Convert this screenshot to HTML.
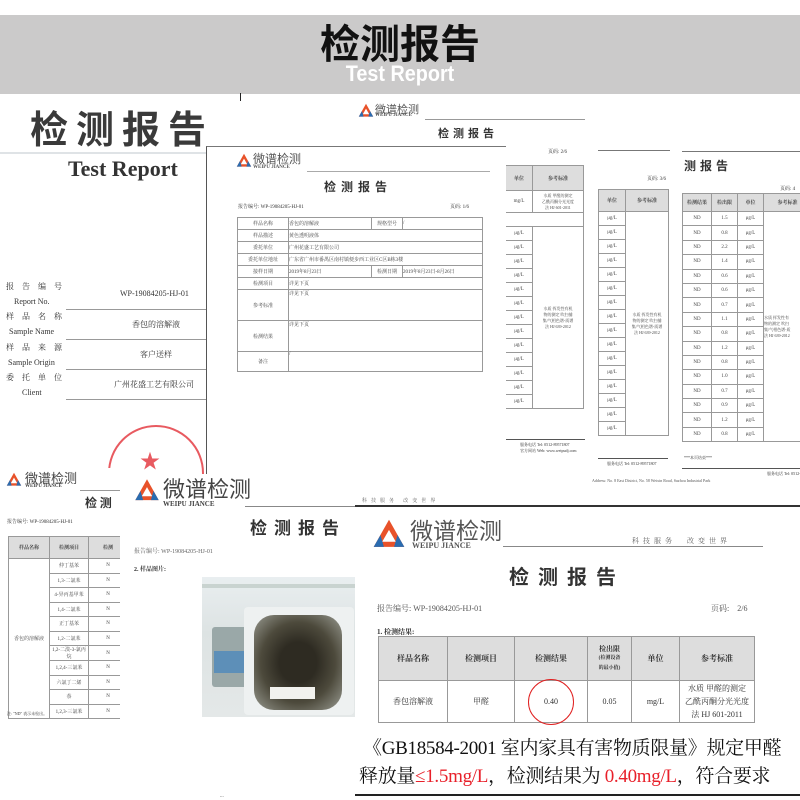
<!DOCTYPE html>
<html><head><meta charset="utf-8">
<style>
*{margin:0;padding:0;box-sizing:border-box}
body{width:800px;height:800px;overflow:hidden;background:#fff;position:relative;font-family:"Liberation Sans","Noto Sans CJK SC",sans-serif;color:#333}
.a{position:absolute}
.doc{position:absolute;background:#fff}
.t{position:absolute;white-space:nowrap;font-family:"Liberation Serif","Noto Serif CJK SC",serif}
.tb{position:absolute;border-collapse:collapse;font-family:"Liberation Serif","Noto Serif CJK SC",serif;color:#444}
.tb td{border:1px solid #999;text-align:center;font-size:5px;padding:0}
.tb tr.h td{background:#ddd;font-weight:bold}
.logo{position:absolute}
.red{color:#e8202a}
</style></head><body>

<div class="a" style="left:0;top:15px;width:800px;height:79px;background:#cbcaca"></div>
<div class="a" style="left:0;top:17px;width:800px;text-align:center;font-size:40px;font-weight:bold;color:#111;font-family:'Noto Sans CJK SC',sans-serif;line-height:48px">检测报告</div>
<div class="a" style="left:0;top:62px;width:800px;text-align:center;font-size:22px;font-weight:bold;color:#fff;line-height:24px;transform:scaleX(0.9)">Test Report</div>
<div class="a" style="left:240px;top:93px;width:1px;height:8px;background:#222"></div>

<div class="doc" style="left:0;top:95px;width:206px;height:380px">
  <div class="t" style="left:30px;top:4px;font-size:38px;font-weight:bold;color:#3a3a3a;letter-spacing:8px;font-family:'Noto Sans CJK SC',sans-serif">检测报告</div>
  <div class="a" style="left:0;top:57px;width:206px;height:2px;background:#dfe3e6"></div>
  <div class="t" style="left:68px;top:61px;font-size:22px;font-weight:bold;color:#333">Test Report</div>
  <div class="t" style="left:6px;top:186px;font-size:8px;letter-spacing:8px">报告编号</div>
  <div class="t" style="left:14px;top:202px;font-size:8px">Report No.</div>
  <div class="t" style="left:6px;top:216px;font-size:8px;letter-spacing:8px">样品名称</div>
  <div class="t" style="left:9px;top:232px;font-size:8px">Sample Name</div>
  <div class="t" style="left:6px;top:247px;font-size:8px;letter-spacing:8px">样品来源</div>
  <div class="t" style="left:8px;top:263px;font-size:8px">Sample Origin</div>
  <div class="t" style="left:6px;top:277px;font-size:8px;letter-spacing:8px">委托单位</div>
  <div class="t" style="left:22px;top:293px;font-size:8px">Client</div>
  <div class="t" style="left:120px;top:194px;font-size:8px">WP-19084205-HJ-01</div>
  <div class="t" style="left:132px;top:224px;font-size:8px">香包的溶解液</div>
  <div class="t" style="left:140px;top:254px;font-size:8px">客户送样</div>
  <div class="t" style="left:114px;top:284px;font-size:8px">广州花盛工艺有限公司</div>
  <div class="a" style="left:66px;top:214px;width:140px;height:1px;background:#999"></div>
  <div class="a" style="left:66px;top:244px;width:140px;height:1px;background:#999"></div>
  <div class="a" style="left:66px;top:274px;width:140px;height:1px;background:#999"></div>
  <div class="a" style="left:66px;top:304px;width:140px;height:1px;background:#999"></div>
  <div class="a" style="left:108px;top:330px;width:96px;height:96px;border:2px solid #e85a60;border-radius:50%"></div>
  <div class="a" style="left:140px;top:350px;font-size:20px;color:#e85a60">★</div>
</div>

<div class="doc" style="left:355px;top:95px;width:240px;height:375px">
  <svg class="logo" style="left:3px;top:8px" width="16" height="16" viewBox="0 0 20 20"><path d="M10 1 L19 17 L1 17Z" fill="#e8522a"/><path d="M10 7 L14 14 L6 14Z" fill="#fff"/><path d="M1 17 L5 10 L7 17Z M19 17 L15 10 L13 17Z" fill="#2a6cb0"/></svg>
  <div class="t" style="left:20px;top:6px;font-size:11px;color:#555;font-family:'Noto Sans CJK SC',sans-serif">微谱检测</div>
  <div class="t" style="left:20px;top:18px;font-size:5px;font-weight:bold;color:#555">WEIPU JIANCE</div>
  <div class="a" style="left:70px;top:24px;width:160px;height:1px;background:#999"></div>
  <div class="t" style="left:83px;top:30px;font-size:11px;font-weight:bold;letter-spacing:4px;font-family:'Noto Sans CJK SC',sans-serif">检测报告</div>
  <div class="t" style="left:193px;top:53px;font-size:5px">页码: 2/6</div>
  <table class="tb" style="left:150px;top:70px;width:79px">
    <tr class="h" style="height:25px"><td style="width:27px">单位</td><td>参考标准</td></tr>
    <tr style="height:22px"><td>mg/L</td><td style="font-size:4px">水质 甲醛的测定<br>乙酰丙酮分光光度<br>法 HJ 601-2011</td></tr>
    <tr style="height:14px"><td colspan="2" style="border-left:0"></td></tr>
    <tr style="height:14px"><td>μg/L</td><td rowspan="13" style="font-size:4px">水质 挥发性有机<br>物的测定 吹扫捕<br>集/气相色谱-质谱<br>法 HJ 639-2012</td></tr>
    <tr style="height:14px"><td>μg/L</td></tr><tr style="height:14px"><td>μg/L</td></tr><tr style="height:14px"><td>μg/L</td></tr><tr style="height:14px"><td>μg/L</td></tr><tr style="height:14px"><td>μg/L</td></tr><tr style="height:14px"><td>μg/L</td></tr><tr style="height:14px"><td>μg/L</td></tr><tr style="height:14px"><td>μg/L</td></tr><tr style="height:14px"><td>μg/L</td></tr><tr style="height:14px"><td>μg/L</td></tr><tr style="height:14px"><td>μg/L</td></tr><tr style="height:14px"><td>μg/L</td></tr>
  </table>
  <div class="a" style="left:150px;top:344px;width:80px;height:1px;background:#555"></div>
  <div class="t" style="left:165px;top:347px;font-size:4px">服务电话 Tel: 0512-89571807<br>官方网站 Web: www.weipudj.com</div>
</div>

<div class="doc" style="left:595px;top:143px;width:80px;height:330px">
  <div class="a" style="left:3px;top:7px;width:72px;height:1px;background:#777"></div>
  <div class="t" style="left:52px;top:32px;font-size:5px">页码: 3/6</div>
  <table class="tb" style="left:3px;top:46px;width:71px">
    <tr class="h" style="height:22px"><td style="width:27px">单位</td><td>参考标准</td></tr>
    <tr style="height:14px"><td>μg/L</td><td rowspan="16" style="font-size:4px">水质 挥发性有机<br>物的测定 吹扫捕<br>集/气相色谱-质谱<br>法 HJ 639-2012</td></tr>
    <tr style="height:14px"><td>μg/L</td></tr><tr style="height:14px"><td>μg/L</td></tr><tr style="height:14px"><td>μg/L</td></tr><tr style="height:14px"><td>μg/L</td></tr><tr style="height:14px"><td>μg/L</td></tr><tr style="height:14px"><td>μg/L</td></tr><tr style="height:14px"><td>μg/L</td></tr><tr style="height:14px"><td>μg/L</td></tr><tr style="height:14px"><td>μg/L</td></tr><tr style="height:14px"><td>μg/L</td></tr><tr style="height:14px"><td>μg/L</td></tr><tr style="height:14px"><td>μg/L</td></tr><tr style="height:14px"><td>μg/L</td></tr><tr style="height:14px"><td>μg/L</td></tr><tr style="height:14px"><td>μg/L</td></tr>
  </table>
  <div class="a" style="left:3px;top:315px;width:70px;height:1px;background:#555"></div>
  <div class="t" style="left:12px;top:318px;font-size:4px">服务电话 Tel: 0512-89571807</div>
</div>
<div class="t" style="left:592px;top:478px;font-size:4px;color:#555">Address: No. 8 East District, No. 58 Weixin Road, Suzhou Industrial Park</div>

<div class="doc" style="left:680px;top:143px;width:120px;height:330px">
  <div class="a" style="left:2px;top:8px;width:118px;height:1px;background:#777"></div>
  <div class="t" style="left:4px;top:14px;font-size:12px;font-weight:bold;letter-spacing:4px;font-family:'Noto Sans CJK SC',sans-serif">测报告</div>
  <div class="t" style="left:100px;top:42px;font-size:5px">页码: 4</div>
  <table class="tb" style="left:2px;top:50px;width:130px">
    <tr class="h" style="height:18px"><td style="width:29px">检测结果</td><td style="width:26px">检出限</td><td style="width:26px">单位</td><td>参考标准</td></tr>
    <tr style="height:14.4px"><td>ND</td><td>1.5</td><td>μg/L</td><td rowspan="16" style="font-size:4px;text-align:left">水质 挥发性有<br>物的测定 吹扫<br>集/气相色谱-质<br>法 HJ 639-2012</td></tr>
    <tr style="height:14.4px"><td>ND</td><td>0.8</td><td>μg/L</td></tr><tr style="height:14.4px"><td>ND</td><td>2.2</td><td>μg/L</td></tr><tr style="height:14.4px"><td>ND</td><td>1.4</td><td>μg/L</td></tr><tr style="height:14.4px"><td>ND</td><td>0.6</td><td>μg/L</td></tr><tr style="height:14.4px"><td>ND</td><td>0.6</td><td>μg/L</td></tr><tr style="height:14.4px"><td>ND</td><td>0.7</td><td>μg/L</td></tr><tr style="height:14.4px"><td>ND</td><td>1.1</td><td>μg/L</td></tr><tr style="height:14.4px"><td>ND</td><td>0.8</td><td>μg/L</td></tr><tr style="height:14.4px"><td>ND</td><td>1.2</td><td>μg/L</td></tr><tr style="height:14.4px"><td>ND</td><td>0.8</td><td>μg/L</td></tr><tr style="height:14.4px"><td>ND</td><td>1.0</td><td>μg/L</td></tr><tr style="height:14.4px"><td>ND</td><td>0.7</td><td>μg/L</td></tr><tr style="height:14.4px"><td>ND</td><td>0.9</td><td>μg/L</td></tr><tr style="height:14.4px"><td>ND</td><td>1.2</td><td>μg/L</td></tr><tr style="height:14.4px"><td>ND</td><td>0.8</td><td>μg/L</td></tr>
  </table>
  <div class="t" style="left:4px;top:312px;font-size:4px">***本页结束***</div>
  <div class="a" style="left:2px;top:325px;width:118px;height:1px;background:#555"></div>
  <div class="t" style="left:87px;top:328px;font-size:4px">服务电话 Tel: 0512-8957</div>
</div>

<div class="doc" style="left:206px;top:146px;width:300px;height:330px;border-left:1px solid #555;border-top:1px solid #777">
  <svg class="logo" style="left:29px;top:6px" width="16" height="16" viewBox="0 0 20 20"><path d="M10 1 L19 17 L1 17Z" fill="#e8522a"/><path d="M10 7 L14 14 L6 14Z" fill="#fff"/><path d="M1 17 L5 10 L7 17Z M19 17 L15 10 L13 17Z" fill="#2a6cb0"/></svg>
  <div class="t" style="left:46px;top:3px;font-size:12px;color:#555;font-family:'Noto Sans CJK SC',sans-serif">微谱检测</div>
  <div class="t" style="left:46px;top:18px;font-size:5px;font-weight:bold;color:#555">WEIPU JIANCE</div>
  <div class="a" style="left:100px;top:24px;width:183px;height:1px;background:#aaa"></div>
  <div class="t" style="left:117px;top:31px;font-size:12px;font-weight:bold;letter-spacing:5px;font-family:'Noto Sans CJK SC',sans-serif">检测报告</div>
  <div class="t" style="left:31px;top:56px;font-size:5px">报告编号: WP-19084205-HJ-01</div>
  <div class="t" style="left:243px;top:56px;font-size:5px">页码: 1/6</div>
  <table class="tb" style="left:30px;top:70px;width:246px">
    <tr style="height:12px"><td style="width:51px">样品名称</td><td style="text-align:left">香包的溶解液</td><td style="width:31px">规格型号</td><td style="text-align:left;width:80px">/</td></tr>
    <tr style="height:12px"><td>样品描述</td><td colspan="3" style="text-align:left">黄色透明液体</td></tr>
    <tr style="height:12px"><td>委托单位</td><td colspan="3" style="text-align:left">广州花盛工艺有限公司</td></tr>
    <tr style="height:12px"><td>委托单位地址</td><td colspan="3" style="text-align:left">广东省广州市番禺区南村镇便步西工业区C区B栋3楼</td></tr>
    <tr style="height:12px"><td>接样日期</td><td style="text-align:left">2019年8月23日</td><td>检测日期</td><td style="text-align:left">2019年8月23日-8月26日</td></tr>
    <tr style="height:12px"><td>检测项目</td><td colspan="3" style="text-align:left">详见下页</td></tr>
    <tr style="height:31px"><td>参考标准</td><td colspan="3" style="text-align:left;vertical-align:top">详见下页</td></tr>
    <tr style="height:31px"><td>检测结果</td><td colspan="3" style="text-align:left;vertical-align:top">详见下页</td></tr>
    <tr style="height:20px"><td>备注</td><td colspan="3" style="text-align:left;vertical-align:top">/</td></tr>
  </table>
</div>

<div class="doc" style="left:0;top:468px;width:125px;height:260px">
  <svg class="logo" style="left:6px;top:4px" width="16" height="16" viewBox="0 0 20 20"><path d="M10 1 L19 17 L1 17Z" fill="#e8522a"/><path d="M10 7 L14 14 L6 14Z" fill="#fff"/><path d="M1 17 L5 10 L7 17Z M19 17 L15 10 L13 17Z" fill="#2a6cb0"/></svg>
  <div class="t" style="left:25px;top:0px;font-size:13px;color:#444;font-family:'Noto Sans CJK SC',sans-serif">微谱检测</div>
  <div class="t" style="left:25px;top:16px;font-size:5px;font-weight:bold;color:#444">WEIPU JIANCE</div>
  <div class="a" style="left:80px;top:22px;width:45px;height:1px;background:#999"></div>
  <div class="t" style="left:85px;top:26px;font-size:12px;font-weight:bold;font-family:'Noto Sans CJK SC',sans-serif">检 测</div>
  <div class="t" style="left:7px;top:50px;font-size:5px">报告编号: WP-19084205-HJ-01</div>
  <table class="tb" style="left:8px;top:68px;width:120px">
    <tr class="h" style="height:22px"><td style="width:41px">样品名称</td><td style="width:39px">检测项目</td><td>检测</td></tr>
    <tr style="height:14.5px"><td rowspan="11">香包的溶解液</td><td>仲丁基苯</td><td>N</td></tr>
    <tr style="height:14.5px"><td>1,3-二氯苯</td><td>N</td></tr><tr style="height:14.5px"><td>4-异丙基甲苯</td><td>N</td></tr><tr style="height:14.5px"><td>1,4-二氯苯</td><td>N</td></tr><tr style="height:14.5px"><td>正丁基苯</td><td>N</td></tr><tr style="height:14.5px"><td>1,2-二氯苯</td><td>N</td></tr><tr style="height:14.5px"><td>1,2-二溴-3-氯丙烷</td><td>N</td></tr><tr style="height:14.5px"><td>1,2,4-三氯苯</td><td>N</td></tr><tr style="height:14.5px"><td>六氯丁二烯</td><td>N</td></tr><tr style="height:14.5px"><td>萘</td><td>N</td></tr><tr style="height:14.5px"><td>1,2,3-三氯苯</td><td>N</td></tr>
  </table>
  <div class="t" style="left:7px;top:243px;font-size:4px">注: "ND" 表示未检出。</div>
</div>

<div class="doc" style="left:120px;top:474px;width:240px;height:326px">
  <svg class="logo" style="left:14px;top:4px" width="26" height="26" viewBox="0 0 20 20"><path d="M10 1 L19 17 L1 17Z" fill="#e8522a"/><path d="M10 7 L14 14 L6 14Z" fill="#fff"/><path d="M1 17 L5 10 L7 17Z M19 17 L15 10 L13 17Z" fill="#2a6cb0"/></svg>
  <div class="t" style="left:43px;top:0px;font-size:22px;color:#444;font-family:'Noto Sans CJK SC',sans-serif;line-height:28px">微谱检测</div>
  <div class="t" style="left:43px;top:26px;font-size:7px;font-weight:bold;color:#444">WEIPU JIANCE</div>
  <div class="a" style="left:125px;top:32px;width:115px;height:1px;background:#888"></div>
  <div class="t" style="left:130px;top:40px;font-size:17px;font-weight:bold;letter-spacing:7px;font-family:'Noto Sans CJK SC',sans-serif">检测报告</div>
  <div class="t" style="left:14px;top:72px;font-size:6px;color:#666">报告编号: WP-19084205-HJ-01</div>
  <div class="t" style="left:14px;top:90px;font-size:6px;font-weight:bold">2. 样品图片:</div>
  <div class="a" style="left:82px;top:103px;width:153px;height:140px;background:linear-gradient(180deg,#e9eef0,#dde3e3 40%,#e4e8e8);overflow:hidden">
    <div class="a" style="left:0;top:7px;width:153px;height:4px;background:#c9d3d0"></div>
    <div class="a" style="left:10px;top:50px;width:40px;height:60px;background:#9aa8a8;border-radius:3px"></div>
    <div class="a" style="left:12px;top:74px;width:36px;height:22px;background:#5d8fb8"></div>
    <div class="a" style="left:42px;top:30px;width:110px;height:108px;background:#eef1f1;border-radius:4px"></div>
    <div class="a" style="left:52px;top:38px;width:88px;height:95px;background:radial-gradient(ellipse at 50% 50%,#2e2b22 30%,#4d4a3c 60%,#7d7d72 85%,#b0b3ad);border-radius:20px"></div>
    <div class="a" style="left:68px;top:110px;width:45px;height:12px;background:#f2f2ee"></div>
  </div>
  <div class="t" style="left:100px;top:320px;font-size:5px">...</div>
</div>

<div class="doc" style="left:355px;top:505px;width:445px;height:291px;border-top:2px solid #333;border-bottom:2px solid #222;overflow:hidden">
  <svg class="logo" style="left:17px;top:11px" width="34" height="34" viewBox="0 0 20 20"><path d="M10 1 L19 17 L1 17Z" fill="#e8522a"/><path d="M10 7 L14 14 L6 14Z" fill="#fff"/><path d="M1 17 L5 10 L7 17Z M19 17 L15 10 L13 17Z" fill="#2a6cb0"/></svg>
  <div class="t" style="left:55px;top:7px;font-size:23px;color:#555;font-family:'Noto Sans CJK SC',sans-serif;line-height:30px">微谱检测</div>
  <div class="t" style="left:57px;top:34px;font-size:8px;font-weight:bold;color:#555">WEIPU JIANCE</div>
  <div class="a" style="left:148px;top:39px;width:260px;height:1px;background:#888"></div>
  <div class="t" style="left:277px;top:29px;font-size:7px;color:#666;letter-spacing:4px">科技服务　改变世界</div>
  <div class="t" style="left:154px;top:54px;font-size:20px;font-weight:bold;letter-spacing:9px;font-family:'Noto Sans CJK SC',sans-serif">检测报告</div>
  <div class="t" style="left:22px;top:96px;font-size:8px;color:#555">报告编号: WP-19084205-HJ-01</div>
  <div class="t" style="left:356px;top:96px;font-size:8px;color:#555">页码:　2/6</div>
  <div class="t" style="left:22px;top:120px;font-size:7px;font-weight:bold">1. 检测结果:</div>
  <table class="tb" style="left:23px;top:129px;width:377px;color:#333">
    <tr class="h" style="height:44px"><td style="width:69px;font-size:8px">样品名称</td><td style="width:67px;font-size:8px">检测项目</td><td style="width:73px;font-size:8px">检测结果</td><td style="width:44px;font-size:7px;line-height:8px">检出限<br><span style="font-size:5px">(检测设备<br>的最小值)</span></td><td style="width:48px;font-size:8px">单位</td><td style="font-size:8px">参考标准</td></tr>
    <tr style="height:42px"><td style="font-size:8px">香包溶解液</td><td style="font-size:8px">甲醛</td><td style="font-size:8px">0.40</td><td style="font-size:8px">0.05</td><td style="font-size:8px">mg/L</td><td style="font-size:8px;line-height:13px">水质 甲醛的测定<br>乙酰丙酮分光光度<br>法 HJ 601-2011</td></tr>
  </table>
  <div class="a" style="left:173px;top:172px;width:46px;height:46px;border:1.5px solid #e02020;border-radius:50%"></div>
  <div class="t" style="left:8px;top:229px;font-size:19px;letter-spacing:-0.3px;color:#111;line-height:26px">《GB18584-2001 室内家具有害物质限量》规定甲醛</div>
  <div class="t" style="left:4px;top:257px;font-size:19px;letter-spacing:-0.3px;color:#111;line-height:26px">释放量<span class="red">≤1.5mg/L</span>，检测结果为<span class="red"> 0.40mg/L</span>，符合要求</div>
</div>
<div class="t" style="left:362px;top:497px;font-size:5px;color:#666;letter-spacing:4px">科技服务 改变世界</div>

</body></html>
